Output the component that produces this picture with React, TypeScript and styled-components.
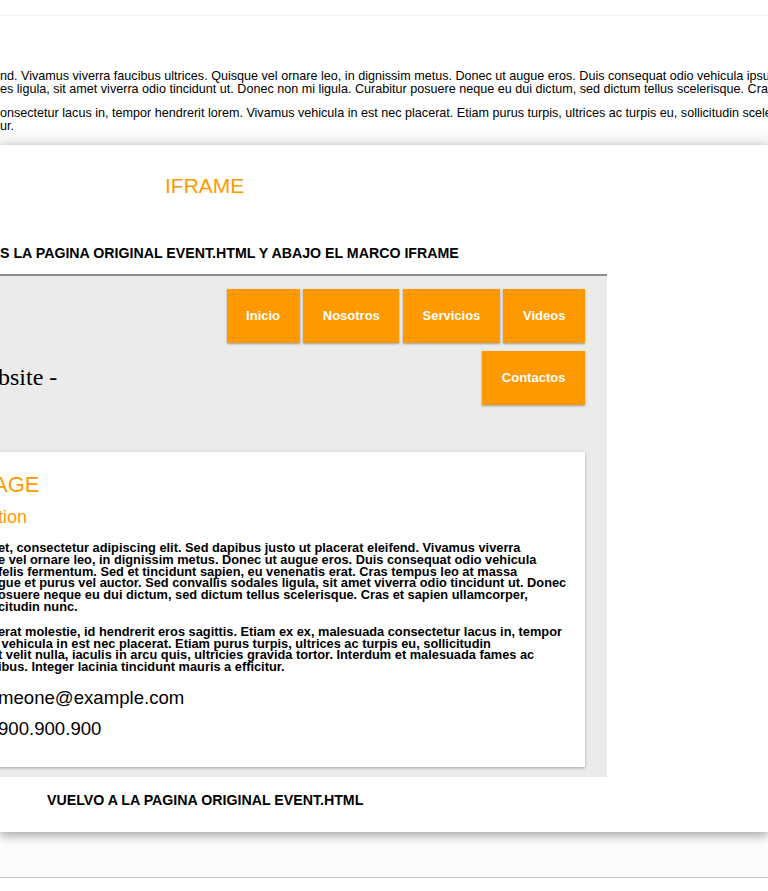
import React from 'react'
import styled, { createGlobalStyle } from 'styled-components'

const orange = '#ff9900'

const GlobalStyle = createGlobalStyle`
	html, body {
		margin: 0;
		padding: 0;
		background: #fff;
		overflow: hidden;
	}
	body {
		width: 768px;
		height: 891px;
		font-family: "Liberation Sans", Arial, Helvetica, sans-serif;
		color: #000;
	}
`;

const TopBar = styled.div`
	height: 15px;
	border-bottom: 1px solid #f3f3f3;
`;

const Intro = styled.section`
	padding: 54px 0 12px;
	background: linear-gradient(#fff 0, #fff 85%, #f4f4f4 100%);
`;

const IntroText = styled.p`
	margin: 0 0 11px;
	font-size: 12.6px;
	line-height: 13px;
	white-space: nowrap;
	&:last-child {
		margin-bottom: 0;
	}
`;

const Main = styled.main`
	position: relative;
	z-index: 1;
	background: #fff;
	padding: 29px 0 24px;
	box-shadow: 0 -2px 8px rgba(0, 0, 0, 0.06), 0 4px 10px rgba(0, 0, 0, 0.32);
`;

const PageTitle = styled.h1`
	margin: 0 0 47px 165px;
	font-size: 21px;
	line-height: 24px;
	font-weight: normal;
	color: ${orange};
`;

const Caption = styled.h3<{ $indent?: number }>`
	margin: 0;
	padding-left: ${(p) => p.$indent ?? 0}px;
	font-size: 14.2px;
	line-height: 16px;
	font-weight: bold;
	white-space: nowrap;
`;

const Frame = styled.div`
	width: 647px;
	margin: 13px 0 15px -40px;
	border-top: 2px solid #8c8c8c;
	background: #ebebeb;
	padding: 13px 22px 10px 0;
	box-sizing: border-box;
`;

const SiteHeader = styled.header`
	display: flex;
	justify-content: space-between;
	align-items: flex-start;
	margin-bottom: 47px;
`;

const Logo = styled.div`
	margin: 74px 0 0 38px;
	font-family: "Liberation Serif", "Times New Roman", serif;
	font-size: 24px;
	line-height: 28px;
	white-space: nowrap;
`;

const Nav = styled.nav`
	display: flex;
	flex-wrap: wrap;
	justify-content: flex-end;
	gap: 8px 3.5px;
	width: 400px;
`;

const NavButton = styled.a`
	display: block;
	height: 54px;
	line-height: 54px;
	padding: 0 19.6px;
	background: ${orange};
	color: #fff;
	font-size: 13px;
	font-weight: bold;
	text-decoration: none;
	box-shadow: 0 1px 2px rgba(0, 0, 0, 0.35);
`;

const Card = styled.article`
	background: #fff;
	padding: 20px 0 28px 38px;
	box-shadow: 0 1px 3px rgba(0, 0, 0, 0.3);
`;

const CardTitle = styled.h1`
	margin: 0 0 9px -5px;
	font-size: 22px;
	line-height: 26px;
	font-weight: normal;
	color: ${orange};
	white-space: nowrap;
`;

const CardSubtitle = styled.h2`
	margin: 0 0 14px;
	font-size: 18px;
	line-height: 21px;
	font-weight: normal;
	color: ${orange};
	white-space: nowrap;
`;

const CardText = styled.p`
	margin: 0 0 13px;
	font-size: 12.8px;
	line-height: 11.8px;
	font-weight: bold;
	white-space: nowrap;
`;

const Contact = styled.p<{ $gap: number }>`
	margin: ${(p) => p.$gap}px 0 0;
	font-size: 18.6px;
	line-height: 21px;
	white-space: nowrap;
`;

const Footer = styled.footer`
	height: 45px;
	background: #fcfcfc;
	border-bottom: 1px solid #c4c4c4;
`;

const navItems = ['Inicio', 'Nosotros', 'Servicios', 'Videos', 'Contactos'];

const App: React.FC = () => {
	return (
		<>
			<GlobalStyle />
			<TopBar />
			<Intro>
				<IntroText>
					nd. Vivamus viverra faucibus ultrices. Quisque vel ornare leo, in dignissim metus. Donec ut augue eros. Duis consequat odio vehicula ipsum
					<br />
					es ligula, sit amet viverra odio tincidunt ut. Donec non mi ligula. Curabitur posuere neque eu dui dictum, sed dictum tellus scelerisque. Cras et
				</IntroText>
				<IntroText>
					onsectetur lacus in, tempor hendrerit lorem. Vivamus vehicula in est nec placerat. Etiam purus turpis, ultrices ac turpis eu, sollicitudin scelerisque
					<br />
					ur.
				</IntroText>
			</Intro>

			<Main>
				<PageTitle>IFRAME</PageTitle>
				<Caption>S LA PAGINA ORIGINAL EVENT.HTML Y ABAJO EL MARCO IFRAME</Caption>

				<Frame>
					<SiteHeader>
						<Logo>bsite -</Logo>
						<Nav>
							{navItems.map((item) => (
								<NavButton key={item} href="#">
									{item}
								</NavButton>
							))}
						</Nav>
					</SiteHeader>

					<Card>
						<CardTitle>AGE</CardTitle>
						<CardSubtitle>tion</CardSubtitle>
						<CardText>
							et, consectetur adipiscing elit. Sed dapibus justo ut placerat eleifend. Vivamus viverra
							<br />
							e vel ornare leo, in dignissim metus. Donec ut augue eros. Duis consequat odio vehicula
							<br />
							felis fermentum. Sed et tincidunt sapien, eu venenatis erat. Cras tempus leo at massa
							<br />
							gue et purus vel auctor. Sed convallis sodales ligula, sit amet viverra odio tincidunt ut. Donec
							<br />
							osuere neque eu dui dictum, sed dictum tellus scelerisque. Cras et sapien ullamcorper,
							<br />
							citudin nunc.
						</CardText>
						<CardText>
							erat molestie, id hendrerit eros sagittis. Etiam ex ex, malesuada consectetur lacus in, tempor
							<br />
							{'\u00a0'}vehicula in est nec placerat. Etiam purus turpis, ultrices ac turpis eu, sollicitudin
							<br />
							t velit nulla, iaculis in arcu quis, ultricies gravida tortor. Interdum et malesuada fames ac
							<br />
							ibus. Integer lacinia tincidunt mauris a efficitur.
						</CardText>
						<Contact $gap={14}>meone@example.com</Contact>
						<Contact $gap={10}>900.900.900</Contact>
					</Card>
				</Frame>

				<Caption $indent={47}>VUELVO A LA PAGINA ORIGINAL EVENT.HTML</Caption>
			</Main>

			<Footer />
		</>
	);
};

export default App;
